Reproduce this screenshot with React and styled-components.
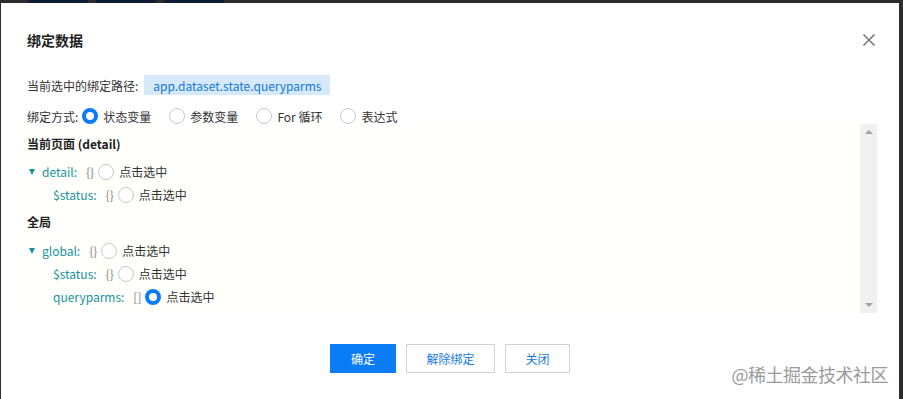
import React from 'react';
import styled, { createGlobalStyle, css } from 'styled-components';

const GlobalStyle = createGlobalStyle`
  html, body {
    margin: 0;
    padding: 0;
    background: #2d2d2d;
    font-family: "Noto Sans CJK SC", "Noto Sans", sans-serif;
    font-size: 12px;
    color: #333;
  }
`;

const TopStrip = styled.div`
  height: 3px;
  display: flex;
  gap: 8px;
  padding-left: 28px;
`;

const TopTab = styled.div`
  width: 60px;
  height: 3px;
  background: #0e1c36;
`;

const Dialog = styled.div`
  position: relative;
  margin-left: 1px;
  width: 898px;
  height: 396px;
  background: #fff;
  display: flex;
  flex-direction: column;
`;

const Header = styled.div`
  display: flex;
  align-items: center;
  justify-content: space-between;
  padding: 28px 26px 0 26px;
  height: 18px;
`;

const Title = styled.div`
  font-size: 14px;
  font-weight: 600;
  color: #222;
  line-height: 18px;
`;

const CloseBtn = styled.div`
  width: 14px;
  height: 14px;
  margin-right: -3px;
  display: flex;
  cursor: pointer;
`;

const Row = styled.div`
  display: flex;
  align-items: center;
  padding: 0 26px;
  height: ${p => p.$h || 20}px;
  margin-top: ${p => p.$mt || 0}px;
`;

const Label = styled.span`
  color: #333;
  margin-right: ${p => p.$mr || 6}px;
`;

const PathTag = styled.span`
  display: inline-flex;
  align-items: center;
  height: 20px;
  padding: 0 9px;
  background: #d5e9fb;
  color: #1478d6;
`;

const RadioCircle = styled.span`
  box-sizing: border-box;
  display: inline-block;
  width: 16px;
  height: 16px;
  border-radius: 50%;
  background: #fff;
  border: 1px solid #c8c8c8;
  flex-shrink: 0;
  ${p => p.$on && css`
    border: 4.5px solid #0a7cf5;
  `}
`;

const RadioOption = styled.label`
  display: inline-flex;
  align-items: center;
  gap: 5px;
  margin-right: ${p => p.$mr || 18}px;
  color: #333;
`;

const ScrollBox = styled.div`
  display: flex;
  margin: 0 22px 0 26px;
  height: 189px;
  background: #fffffb;
`;

const ScrollContent = styled.div`
  flex: 1;
  padding-top: 8px;
`;

const SectionTitle = styled.div`
  font-weight: bold;
  height: 24px;
  line-height: 24px;
  margin-top: ${p => p.$mt || 0}px;
  color: #222;
`;

const TreeRow = styled.div`
  display: flex;
  align-items: center;
  height: 23px;
  padding-left: ${p => (p.$child ? 26 : 2)}px;
  margin-top: ${p => p.$mt || 0}px;
`;

const Caret = styled.span`
  width: 0;
  height: 0;
  border-left: 3px solid transparent;
  border-right: 3px solid transparent;
  border-top: 6px solid #17929c;
  margin-right: 7px;
`;

const Key = styled.span`
  color: #17939e;
  margin-right: 9px;
`;

const Brace = styled.span`
  color: #888;
  margin-right: 4px;
`;

const PickText = styled.span`
  margin-left: 5px;
  color: #333;
`;

const ScrollBar = styled.div`
  width: 17px;
  background: #f0f0f0;
  display: flex;
  flex-direction: column;
  justify-content: space-between;
  align-items: center;
  padding: 6px 0;
  box-sizing: border-box;
`;

const Arrow = styled.span`
  width: 0;
  height: 0;
  border-left: 4px solid transparent;
  border-right: 4px solid transparent;
  ${p => (p.$down ? css`border-top: 4px solid #a3a3a3;` : css`border-bottom: 4px solid #a3a3a3;`)}
`;

const Footer = styled.div`
  display: flex;
  justify-content: center;
  gap: 10px;
  margin-top: 31px;
`;

const Button = styled.button`
  box-sizing: border-box;
  height: 29px;
  width: ${p => p.$w}px;
  font-family: inherit;
  font-size: 12px;
  cursor: pointer;
  ${p => p.$primary ? css`
    background: #0a7cf5;
    color: #fff;
    border: 1px solid #0a7cf5;
  ` : css`
    background: #fff;
    color: #1578e0;
    border: 1px solid #d2d2d2;
  `}
`;

const Watermark = styled.div`
  position: absolute;
  right: 11px;
  bottom: 12px;
  font-size: 18px;
  color: #9a9a9a;
  letter-spacing: -0.5px;
`;

const tree = [
  { title: '当前页面 (detail)', mt: 0, rows: [
    { key: 'detail:', brace: '{}', root: true },
    { key: '$status:', brace: '{}' },
  ]},
  { title: '全局', mt: 4, rows: [
    { key: 'global:', brace: '{}', root: true },
    { key: '$status:', brace: '{}' },
    { key: 'queryparms:', brace: '[]', on: true },
  ]},
];

const methods = [
  { text: '状态变量', on: true },
  { text: '参数变量' },
  { text: 'For 循环' },
  { text: '表达式' },
];

export default function App() {
  return (
    <>
      <GlobalStyle />
      <TopStrip>
        <TopTab /><TopTab /><TopTab />
      </TopStrip>
      <Dialog>
        <Header>
          <Title>绑定数据</Title>
          <CloseBtn>
            <svg width="14" height="14" viewBox="0 0 14 14">
              <path d="M1.5 1.5 L12.5 12.5 M12.5 1.5 L1.5 12.5" stroke="#777" strokeWidth="1.6" />
            </svg>
          </CloseBtn>
        </Header>
        <Row $h={20} $mt={26}>
          <Label>当前选中的绑定路径:</Label>
          <PathTag>app.dataset.state.queryparms</PathTag>
        </Row>
        <Row $h={16} $mt={13}>
          <Label $mr={4}>绑定方式:</Label>
          {methods.map(m => (
            <RadioOption key={m.text}>
              <RadioCircle $on={m.on} />
              {m.text}
            </RadioOption>
          ))}
        </Row>
        <ScrollBox>
          <ScrollContent>
            {tree.map(sec => (
              <React.Fragment key={sec.title}>
                <SectionTitle $mt={sec.mt}>{sec.title}</SectionTitle>
                {sec.rows.map((r, i) => (
                  <TreeRow key={r.key + i} $child={!r.root} $mt={i === 0 ? (sec.mt ? 5 : 4) : 0}>
                    {r.root && <Caret />}
                    <Key>{r.key}</Key>
                    <Brace>{r.brace}</Brace>
                    <RadioCircle $on={r.on} />
                    <PickText>点击选中</PickText>
                  </TreeRow>
                ))}
              </React.Fragment>
            ))}
          </ScrollContent>
          <ScrollBar>
            <Arrow />
            <Arrow $down />
          </ScrollBar>
        </ScrollBox>
        <Footer>
          <Button $primary $w={66}>确定</Button>
          <Button $w={89}>解除绑定</Button>
          <Button $w={65}>关闭</Button>
        </Footer>
        <Watermark>@稀土掘金技术社区</Watermark>
      </Dialog>
    </>
  );
}
